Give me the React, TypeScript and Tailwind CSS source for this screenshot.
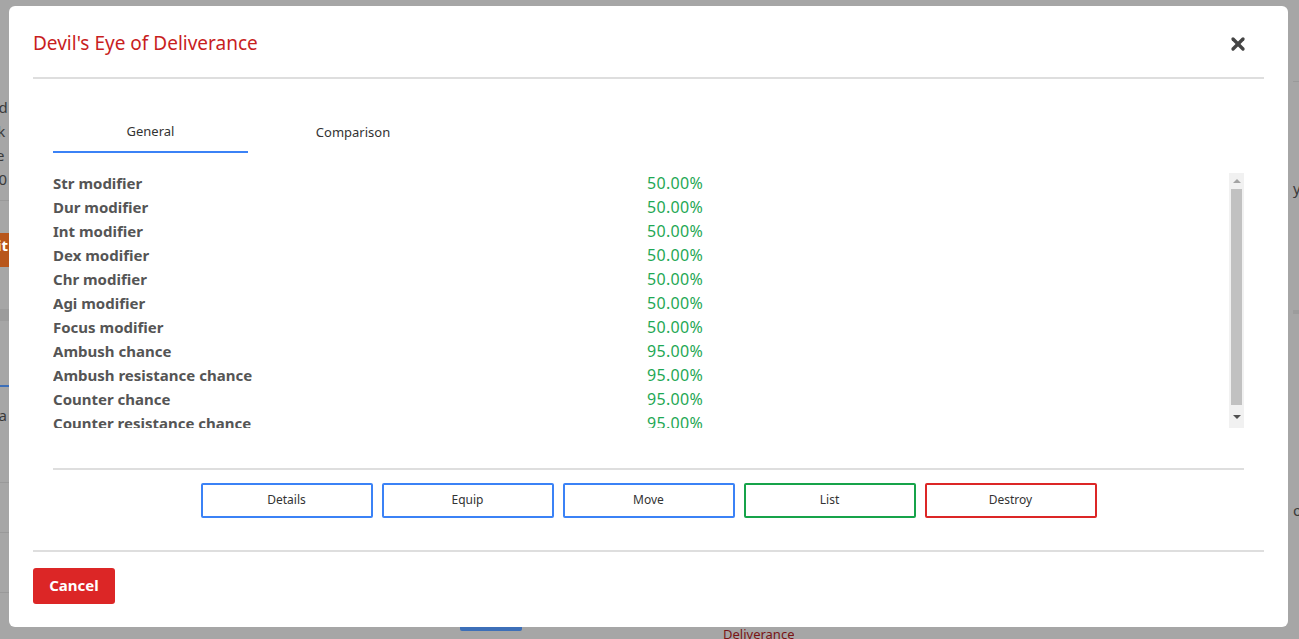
import { X } from 'lucide-react'

const STATS = [
  { label: 'Str modifier', value: '50.00%' },
  { label: 'Dur modifier', value: '50.00%' },
  { label: 'Int modifier', value: '50.00%' },
  { label: 'Dex modifier', value: '50.00%' },
  { label: 'Chr modifier', value: '50.00%' },
  { label: 'Agi modifier', value: '50.00%' },
  { label: 'Focus modifier', value: '50.00%' },
  { label: 'Ambush chance', value: '95.00%' },
  { label: 'Ambush resistance chance', value: '95.00%' },
  { label: 'Counter chance', value: '95.00%' },
  { label: 'Counter resistance chance', value: '95.00%' },
  { label: 'Steal life amount', value: '25.00%' },
  { label: 'Healing amount', value: '10.00%' },
]

const ACTIONS = [
  { label: 'Details', border: 'border-[#3b82f6]' },
  { label: 'Equip', border: 'border-[#3b82f6]' },
  { label: 'Move', border: 'border-[#3b82f6]' },
  { label: 'List', border: 'border-[#16a34a]' },
  { label: 'Destroy', border: 'border-[#dc2626]' },
]

function BackgroundPage() {
  // the page behind the dimmed overlay, mostly hidden by the modal
  return (
    <div className="h-[639px] w-full overflow-hidden bg-[#a6a6a6] text-[#3a3a3a] flex flex-col">
      <div className="h-[627px] flex justify-between">
        <div className="w-[40px] -ml-[10px] flex flex-col text-[15px] leading-[24px]">
          <div className="h-[95px]" />
          <div>ad</div>
          <div>sk</div>
          <div>re</div>
          <div>00</div>
          <div className="h-[10px] border-b border-[#999]" />
          <div className="h-[32px]" />
          <div className="h-[34px] bg-[#b8561b] text-white font-bold pl-[7px]">it</div>
          <div className="h-[42px]" />
          <div className="h-[12px] bg-[#9c9c9c]" />
          <div className="h-[64px]" />
          <div className="h-[2px] bg-[#3d6fb8]" />
          <div className="mt-[16px]">ea</div>
          <div className="h-[56px] border-b border-[#999]" />
          <div className="h-[50px] border-b border-[#999]" />
          <div className="h-[60px] border-b border-[#999]" />
        </div>
        <div className="w-[20px] flex flex-col text-[15px] leading-[24px] pl-[14px]">
          <div className="h-[82px] border-b border-[#999]" />
          <div className="h-[94px]" />
          <div>y</div>
          <div className="h-[114px] border-b-4 border-[#9c9c9c]" />
          <div className="h-[184px]" />
          <div>or</div>
        </div>
      </div>
      <div className="flex items-start h-[12px]">
        <div className="ml-[460px] w-[62px] h-[4px] bg-[#3d6fb8] rounded-b-[2px]" />
        <div className="ml-[201px] h-[12px] overflow-hidden">
          <div className="text-[13px] leading-[14px] text-[#7a1414]">Deliverance</div>
        </div>
      </div>
    </div>
  )
}

export default function App() {
  return (
    <div className="relative w-[1299px] h-[639px] overflow-hidden" style={{ fontFamily: '"Noto Sans", "Open Sans", sans-serif' }}>
      <BackgroundPage />

      <div className="absolute inset-0 pl-[9px] pt-[6px]">
        <div className="w-[1279px] h-[621px] bg-white rounded-[6px] px-[24px] flex flex-col">
          {/* header */}
          <div className="h-[73px] flex items-center justify-between border-b-2 border-[#dedede]">
            <h3 className="text-[19px] text-[#c81e1e] pt-[4px]">Devil's Eye of Deliverance</h3>
            <button className="mr-[16px] mt-[4px] text-[#444]">
              <X size={20} strokeWidth={4} />
            </button>
          </div>

          {/* body */}
          <div className="px-[20px] pt-[32px] flex flex-col">
            <div className="flex h-[42px]">
              <div className="w-[195px] flex items-start justify-center pt-[11px] border-b-2 border-[#3b82f6] text-[13px] text-[#333]">
                General
              </div>
              <div className="w-[210px] flex items-start justify-center pt-[12px] text-[13px] text-[#333]">
                Comparison
              </div>
            </div>

            <div className="mt-[20px] h-[255px] flex">
              <div className="flex-1 overflow-hidden">
                <div className="-mt-[2px]">
                  {STATS.map((s) => (
                    <div key={s.label} className="grid grid-cols-[594px_1fr] h-[24px] items-center text-[15px]">
                      <div className="font-bold text-[#555]">{s.label}</div>
                      <div className="text-[#1fa855] text-[16px] tracking-[0.3px]">{s.value}</div>
                    </div>
                  ))}
                </div>
              </div>
              {/* scrollbar */}
              <div className="w-[15px] bg-[#f1f1f1] flex flex-col items-center">
                <div className="h-[16px] flex items-center justify-center">
                  <div className="w-0 h-0 border-l-[4px] border-r-[4px] border-b-[4px] border-l-transparent border-r-transparent border-b-[#a3a3a3]" />
                </div>
                <div className="w-[11px] h-[216px] bg-[#c1c1c1]" />
                <div className="flex-1 flex items-center justify-center">
                  <div className="w-0 h-0 border-l-[4px] border-r-[4px] border-t-[4px] border-l-transparent border-r-transparent border-t-[#505050]" />
                </div>
              </div>
            </div>

            <div className="mt-[40px] border-t-2 border-[#dedede] pt-[13px] flex justify-center gap-[9px]">
              {ACTIONS.map((a) => (
                <button
                  key={a.label}
                  className={`w-[172px] h-[35px] border-2 ${a.border} rounded-[2px] text-[12px] text-[#333] bg-white pb-[2px]`}
                >
                  {a.label}
                </button>
              ))}
            </div>
          </div>

          {/* footer */}
          <div className="mt-[32px] border-t-2 border-[#dedede] pt-[16px]">
            <button className="w-[82px] h-[36px] bg-[#dc2626] rounded-[3px] text-white font-bold text-[15px] pb-[2px]">
              Cancel
            </button>
          </div>
        </div>
      </div>
    </div>
  )
}
